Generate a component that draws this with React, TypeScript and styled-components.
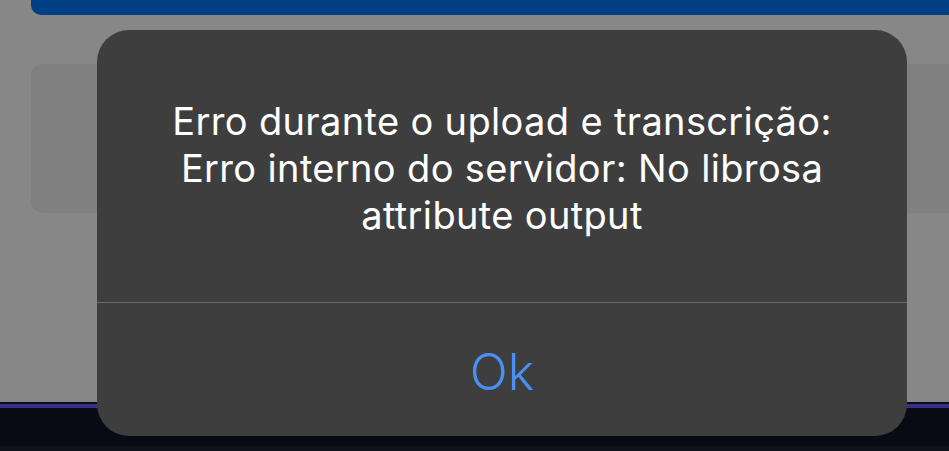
import React from "react";
import styled, { createGlobalStyle } from "styled-components";

const Global = createGlobalStyle`
  html, body { margin: 0; padding: 0; }
  body { width: 949px; height: 451px; overflow: hidden; background: #878787; font-family: Inter, "Noto Sans", sans-serif; }
  #root { height: 451px; }
`;

const Page = styled.div`
  position: relative;
  height: 451px;
  display: flex;
  flex-direction: column;
  background: #878787;
`;

const HeaderBar = styled.div`
  margin-left: 31px;
  height: 15px;
  background: #003f86;
  border-bottom-left-radius: 10px;
`;

const Card = styled.div`
  margin: 49px -20px 0 31px;
  height: 149px;
  background: #808080;
  border-radius: 12px;
`;

const Spacer = styled.div`
  flex: 1;
`;

const TabBar = styled.div`
  height: 49px;
  display: flex;
  flex-direction: column;
  background: #080b14;
`;

const TabTopEdge = styled.div`
  height: 2px;
  background: #0b0d18;
`;

const TabAccent = styled.div`
  height: 4px;
  background: #3a2f86;
`;

const TabBody = styled.div`
  flex: 1;
  background: #080b14;
`;

const TabFoot = styled.div`
  height: 5px;
  background: #0e111a;
`;

const Overlay = styled.div`
  position: absolute;
  inset: 0;
  display: flex;
  align-items: flex-start;
  justify-content: center;
`;

const Alert = styled.div`
  margin-top: 30px;
  margin-left: 55px;
  width: 810px;
  height: 406px;
  background: #3e3e3e;
  border-radius: 32px;
  display: flex;
  flex-direction: column;
  overflow: hidden;
`;

const Message = styled.div`
  height: 272px;
  box-sizing: border-box;
  padding: 68px 30px 0;
  color: #ffffff;
  font-size: 38px;
  line-height: 47px;
  text-align: center;
  letter-spacing: 0.35px;
`;

const Divider = styled.div`
  height: 1px;
  background: #6a6a6a;
`;

const ActionButton = styled.button`
  flex: 1;
  border: none;
  background: transparent;
  color: #4a90f2;
  font-family: Inter, "Noto Sans", sans-serif;
  font-size: 50px;
  font-weight: 300;
  padding: 4px 0 0;
  cursor: pointer;
`;

export default function App() {
  return (
    <>
      <Global />
      <Page>
        <HeaderBar />
        <Card />
        <Spacer />
        <TabBar>
          <TabTopEdge />
          <TabAccent />
          <TabBody />
          <TabFoot />
        </TabBar>
        <Overlay>
          <Alert role="alertdialog">
            <Message>
              Erro durante o upload e transcrição:
              <br />
              Erro interno do servidor: No librosa
              <br />
              attribute output
            </Message>
            <Divider />
            <ActionButton>Ok</ActionButton>
          </Alert>
        </Overlay>
      </Page>
    </>
  );
}
